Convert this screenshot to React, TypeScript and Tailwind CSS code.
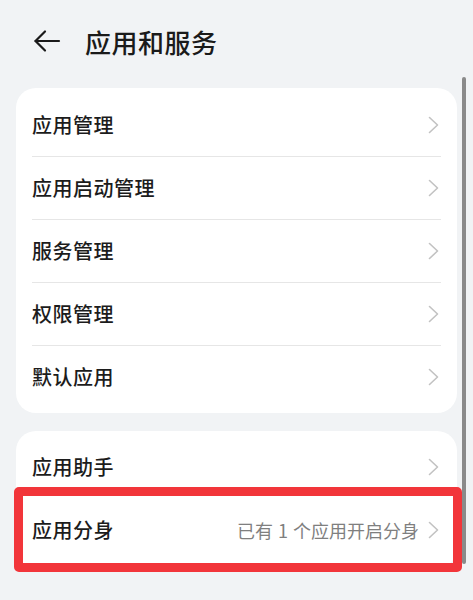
import React from 'react';

const font = { fontFamily: '"Noto Sans CJK SC", "Noto Sans", sans-serif' };

function IconBack() {
  return (
    <svg className="w-[28px] h-[24px] text-[#1a1a1a]" viewBox="0 0 28 24" fill="none" stroke="currentColor" strokeWidth={2.2} strokeLinecap="round" strokeLinejoin="round">
      <path d="M26 12H2.5" />
      <path d="M12 2.5L2.5 12l9.5 9.5" />
    </svg>
  );
}

function IconChevron() {
  return (
    <svg className="w-[11px] h-[18px] text-[#c2c2c2] shrink-0" viewBox="0 0 11 18" fill="none" stroke="currentColor" strokeWidth={1.6} strokeLinecap="round" strokeLinejoin="round">
      <path d="M1.5 1.5l8 7.5-8 7.5" />
    </svg>
  );
}

function Row({ label, value, divider }: { label: string; value?: React.ReactNode; divider?: boolean }) {
  return (
    <div>
      <div className="flex items-center h-[62px] pl-4 pr-[18px]">
        <span className="flex-1 text-[20px] text-[#1c1c1c] font-medium tracking-[0.5px]">{label}</span>
        {value && <span className="text-[18px] text-[#7f7f7f] mr-[9px]">{value}</span>}
        <IconChevron />
      </div>
      <div className={divider ? 'mx-4 h-px bg-[#e6e6e6]' : 'h-px'} />
    </div>
  );
}

export default function App() {
  const group1 = ['应用管理', '应用启动管理', '服务管理', '权限管理', '默认应用'];

  return (
    <div className="relative h-[600px] w-[473px] overflow-hidden bg-[#f1f3f5]" style={font}>
      {/* Header */}
      <div className="flex items-center h-[82px] pl-[33px]">
        <IconBack />
        <h1 className="ml-[24px] text-[26px] font-medium text-[#1a1a1a] tracking-[0.5px]">应用和服务</h1>
      </div>

      {/* Group 1 */}
      <div className="mx-4 mt-[6px] rounded-[20px] bg-white pt-[6px] pb-[4px]">
        {group1.map((l, i) => (
          <Row key={l} label={l} divider={i < group1.length - 1} />
        ))}
      </div>

      {/* Group 2 */}
      <div className="mx-4 mt-[18px] rounded-[20px] bg-white pt-[5px] pb-[6px]">
        <Row label="应用助手" />
        <Row
          label="应用分身"
          value={
            <>
              已有<span className="mx-[5px]">1</span>个应用开启分身
            </>
          }
        />
      </div>

      {/* Highlight box */}
      <div className="absolute left-[14px] top-[487px] w-[448px] h-[85px] rounded-[5px] border-[9px] border-[#f2353a]" />

      {/* Scrollbar */}
      <div className="absolute left-[462px] top-[77px] w-[4px] h-[487px] rounded-full bg-[#8a8a8a]" />
    </div>
  );
}
